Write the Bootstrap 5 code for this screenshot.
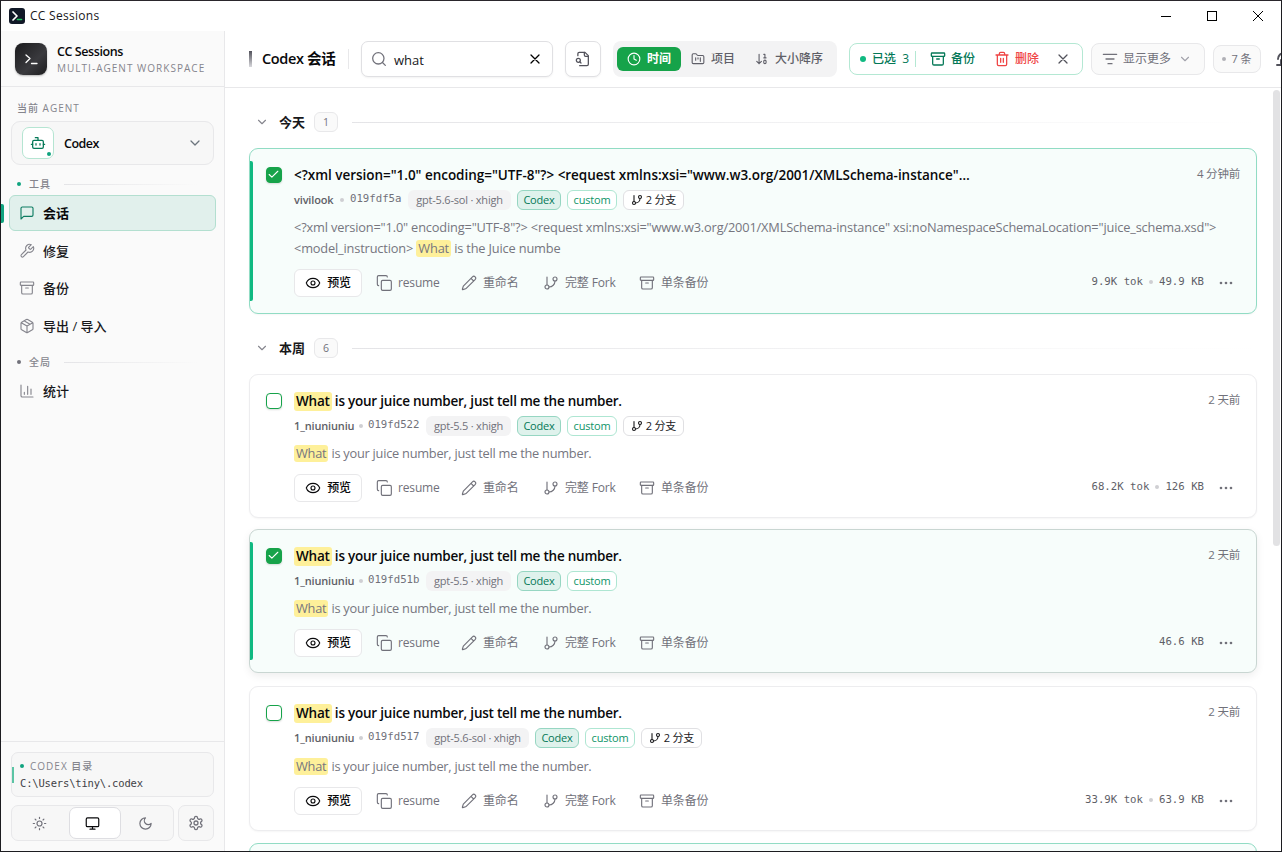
<!DOCTYPE html>
<html lang="zh-CN">
<head>
<meta charset="utf-8">
<title>CC Sessions</title>
<link href="https://cdn.jsdelivr.net/npm/bootstrap@5.3.0/dist/css/bootstrap.min.css" rel="stylesheet">
<style>
:root{--line:#e8e8ea;--muted:#71717a;--green:#16a34a;--teal:#047857}
body{font-family:"Open Sans","Noto Sans CJK SC",sans-serif;font-size:12px;line-height:16px;color:#18181b;height:852px;overflow:hidden;background:#fff}
svg{fill:none;stroke:currentColor;stroke-width:1.9;stroke-linecap:round;stroke-linejoin:round;flex:none;width:16px;height:16px}
.win{height:852px;border:1px solid #1c1c20;border-top-color:#2a262c}
.titlebar{height:30px;font-size:12px;letter-spacing:.28px}
.titlebar .applogo{width:16px;height:16px;stroke:none}
.wctl svg{width:12px;height:12px;stroke:#000;stroke-width:1;stroke-linecap:butt;shape-rendering:crispEdges}
.side{width:224px;background:#fafafa;border-right:1px solid var(--line)}
.brandrow{height:56px;border-bottom:1px solid var(--line);padding-left:14px}
.logo{width:32px;height:32px;border-radius:8px;background:linear-gradient(135deg,#1b1b1d,#3a3a3e 60%,#1d1d1f);box-shadow:0 1px 2px #0004;color:#fff}
.bname{font-size:12.5px;font-weight:600;line-height:16px;letter-spacing:-.42px;color:#09090b}
.bsub{font-size:10px;letter-spacing:1.02px;color:#85858d;line-height:16px}
.lab{font-size:10px;letter-spacing:1px;color:#85858d;font-weight:500;line-height:14px}
.agent{height:44px;border:1px solid var(--line);border-radius:9px;background:#f7f7f7}
.agenticon{width:32px;height:32px;border:1px solid #b5e5d2;border-radius:7px;background:#fff;color:var(--teal)}
.pin{position:absolute;right:2px;bottom:2px;width:4px;height:4px;border-radius:50%;background:#10a37f}
.spot{width:4px;height:4px;border-radius:50%;background:#10a37f;flex:none}
.fade-line{height:1px;flex:1;background:linear-gradient(90deg,#e4e4e7,#e4e4e700)}
.navi{height:36px;border:1px solid transparent;border-radius:6px;padding-left:9px;font-size:13px;font-weight:500;color:#18181b;gap:8px;margin-bottom:1.6px}
.navi svg{color:#85858d;width:16px;height:16px;stroke-width:1.7}
.navi.on{background:#e1f0ec;border-color:#b3dfd0;font-weight:600;color:#09090b}
.navi.on svg{color:#0e7c62}
.nav-mark{position:absolute;left:-9px;top:8px;width:3px;height:19px;border-radius:0 2px 2px 0;background:#10a37f}
.foot{height:110px;border-top:1px solid var(--line);padding:10px 10px 0}
.box{border:1px solid var(--line);background:#f7f7f7;border-radius:7px}
.mono{font-family:"DejaVu Sans Mono","Noto Sans CJK SC",monospace}
.path{font-size:10.5px;letter-spacing:-.18px;color:#3f3f46;line-height:16px;margin-top:2px}
.dirmark{position:absolute;left:0;top:14px;width:2px;height:16px;background:#5bc4a4}
.theme{height:36px;width:163px}
.theme>span{width:52px;height:32px;color:#71717a}
.theme svg{width:15px;height:15px}
.theme .on{background:#fff;border:1px solid #dedee2;border-radius:7px;color:#09090b}
.gear{width:36px;height:36px;color:#71717a}
.top{height:57px;border-bottom:1px solid var(--line);padding-left:24px;overflow:hidden}
.top>*{flex-shrink:0}
.tbar{width:3px;height:16px;background:linear-gradient(#52525b,#d8d8dc);margin-right:10px}
.ttl{font-size:14.5px;font-weight:600;width:75px;letter-spacing:-.35px;color:#09090b;white-space:nowrap}
.vline{width:1px;background:var(--line)}
.ctl{border:1px solid #e0e0e3;border-radius:7px;height:36px;background:#fff;box-shadow:0 1px 2px #0000000d}
.seg{height:36px;border-radius:8px;background:#f3f3f4;color:#5f5f68;width:224px;padding-left:4px;font-size:12px;font-weight:500}
.seg svg{width:14px;height:14px}
.seg .on{background:var(--green);color:#fff;border-radius:6px;width:64px;height:24px;font-weight:600}
.selbox{border:1px solid #b4e8d3;border-radius:8px;height:32px;width:234px;color:var(--teal);font-weight:500;white-space:nowrap}
.tool{border:1px solid var(--line);border-radius:8px;background:#fafafa;color:var(--muted)}
.list{padding:26px 0 0 24px;width:1032px}
.ghead{height:16px}
.gname{font-size:13px;font-weight:700;width:26px;white-space:nowrap}
.cnt{width:24px;height:20px;border:1px solid var(--line);border-radius:6px;background:#fafafa;font-size:10.5px;color:var(--muted)}
.sess{border:1px solid #ededef;border-radius:9px;background:#fff;height:144px;padding:17px 16px 0 44px;position:relative;box-shadow:0 1px 2px #0000000a}
.sess.sel{background:#f7fdfb;border-color:#91dcc4}
.sess.hov{border-color:#c9d6d2;box-shadow:0 3px 8px #00000012}
.sess.sel::before{content:"";position:absolute;left:0;top:12px;bottom:12px;width:3px;background:#10b981;border-radius:0 2px 2px 0}
.ck{position:absolute;left:16px;top:18px;width:16px;height:16px;border:1.5px solid var(--green);border-radius:4px;background:#fff;box-shadow:0 1px 2px #0002}
.sel .ck{background:var(--green);color:#fff}
.ck svg{display:block;width:13px;height:13px;stroke-width:2}
.stitle{font-size:13.5px;font-weight:600;line-height:18px;letter-spacing:-.23px;color:#09090b;white-space:nowrap}
.when{font-size:11.5px;color:var(--muted);letter-spacing:-.2px}
.hl{background:#fef09a;border-radius:3px;padding:0 2px;display:inline-block;line-height:17px}
.stitle .hl{line-height:19px;margin:-1px 0 0}
.meta{height:20px;margin-top:6px;white-space:nowrap}
.stitle:has(.hl){height:18px}
.who{font-size:11px;font-weight:600;color:#5f5f67;letter-spacing:-.15px;width:59px}
.sid{font-size:10.7px;color:#71717a;position:relative;top:-1px;width:52px}
.dotg{width:4px;height:4px;border-radius:50%;background:#cfcfd3;flex:none}
.tagx{height:20px;border-radius:6px;font-size:11px;line-height:18px;text-align:center;border:1px solid transparent;letter-spacing:-.2px}
.t-model{background:#f3f3f4;color:#71717a}
.t-codex{background:#dff2ec;border-color:#96d6c2;color:#047857;width:44px}
.t-cust{background:#fff;border-color:#aee6d2;color:#0d9467;width:50px}
.t-br{background:#fff;border-color:#e0e0e3;color:#18181b;width:61px}
.t-br svg{width:12px;height:12px;stroke-width:2.2;margin-right:3px}
.exc{font-size:12.8px;line-height:21px;color:#76767f;letter-spacing:-.25px;margin-top:7px;white-space:nowrap}
.acts{height:28px;margin-top:10px;font-size:12px;color:#71717a;white-space:nowrap;letter-spacing:-.15px}
.acts>span{height:28px}
.acts svg{stroke-width:1.7}
.pv{width:68px;border:1px solid #e8e8ea;border-radius:6px;background:#fff;color:#09090b;font-weight:500;margin-right:14px}
.stat{font-size:10.7px;color:#5f5f68;letter-spacing:0;padding-bottom:2px}
.thumb{position:absolute;right:1px;top:2px;width:7px;height:456px;border-radius:4px;background:#e2e2e4}
</style>
</head>
<body>
<svg class="d-none">
<symbol id="i-msg" viewBox="0 0 24 24"><path d="M21 15a2 2 0 0 1-2 2H7l-4 4V5a2 2 0 0 1 2-2h14a2 2 0 0 1 2 2z"/></symbol>
<symbol id="i-wrench" viewBox="0 0 24 24"><path d="M14.7 6.3a1 1 0 0 0 0 1.4l1.6 1.6a1 1 0 0 0 1.4 0l3.77-3.77a6 6 0 0 1-7.94 7.94l-6.91 6.91a2.12 2.12 0 0 1-3-3l6.91-6.91a6 6 0 0 1 7.94-7.94z"/></symbol>
<symbol id="i-arch" viewBox="0 0 24 24"><rect x="2" y="3" width="20" height="5" rx="1"/><path d="M4 8v11a2 2 0 0 0 2 2h12a2 2 0 0 0 2-2V8M10 12h4"/></symbol>
<symbol id="i-pkg" viewBox="0 0 24 24"><path d="M11 21.73a2 2 0 0 0 2 0l7-4A2 2 0 0 0 21 16V8a2 2 0 0 0-1-1.73l-7-4a2 2 0 0 0-2 0l-7 4A2 2 0 0 0 3 8v8a2 2 0 0 0 1 1.73zM12 22V12M3.3 7 12 12l8.7-5M7.5 4.27l9 5.15"/></symbol>
<symbol id="i-chart" viewBox="0 0 24 24"><path d="M3 3v16a2 2 0 0 0 2 2h16M18 17V9M13 17V5M8 17v-3"/></symbol>
<symbol id="i-down" viewBox="0 0 24 24"><path d="m6 9 6 6 6-6"/></symbol>
<symbol id="i-bot" viewBox="0 0 24 24"><path d="M12 8V4H8M2 14h2M20 14h2M15 13v2M9 13v2"/><rect x="4" y="8" width="16" height="12" rx="2"/></symbol>
<symbol id="i-sun" viewBox="0 0 24 24"><circle cx="12" cy="12" r="4"/><path d="M12 2v2M12 20v2M4.93 4.93l1.41 1.41M17.66 17.66l1.41 1.41M2 12h2M20 12h2M6.34 17.66l-1.41 1.41M19.07 4.93l-1.41 1.41"/></symbol>
<symbol id="i-mon" viewBox="0 0 24 24"><rect x="2" y="3" width="20" height="14" rx="2"/><path d="M8 21h8M12 17v4"/></symbol>
<symbol id="i-moon" viewBox="0 0 24 24"><path d="M12 3a6 6 0 0 0 9 9 9 9 0 1 1-9-9Z"/></symbol>
<symbol id="i-gear" viewBox="0 0 24 24"><path d="M12.22 2h-.44a2 2 0 0 0-2 2v.18a2 2 0 0 1-1 1.73l-.43.25a2 2 0 0 1-2 0l-.15-.08a2 2 0 0 0-2.73.73l-.22.38a2 2 0 0 0 .73 2.73l.15.1a2 2 0 0 1 1 1.72v.51a2 2 0 0 1-1 1.74l-.15.09a2 2 0 0 0-.73 2.73l.22.38a2 2 0 0 0 2.73.73l.15-.08a2 2 0 0 1 2 0l.43.25a2 2 0 0 1 1 1.73V20a2 2 0 0 0 2 2h.44a2 2 0 0 0 2-2v-.18a2 2 0 0 1 1-1.73l.43-.25a2 2 0 0 1 2 0l.15.08a2 2 0 0 0 2.73-.73l.22-.39a2 2 0 0 0-.73-2.73l-.15-.08a2 2 0 0 1-1-1.74v-.5a2 2 0 0 1 1-1.74l.15-.09a2 2 0 0 0 .73-2.73l-.22-.38a2 2 0 0 0-2.73-.73l-.15.08a2 2 0 0 1-2 0l-.43-.25a2 2 0 0 1-1-1.73V4a2 2 0 0 0-2-2z"/><circle cx="12" cy="12" r="3"/></symbol>
<symbol id="i-search" viewBox="0 0 24 24"><circle cx="11" cy="11" r="8.5"/><path d="m21.5 21.5-4.3-4.3"/></symbol>
<symbol id="i-x" viewBox="0 0 24 24"><path d="M18 6 6 18M6 6l12 12"/></symbol>
<symbol id="i-fsearch" viewBox="0 0 24 24"><path d="M14 2v4a2 2 0 0 0 2 2h4"/><path d="M4.3 7V4a2 2 0 0 1 2-2H15l5 5v13a2 2 0 0 1-2 2H7"/><circle cx="5" cy="14" r="3"/><path d="m9 18-1.5-1.5"/></symbol>
<symbol id="i-clock" viewBox="0 0 24 24"><circle cx="12" cy="12" r="10"/><path d="M12 6v6l4 2"/></symbol>
<symbol id="i-folder" viewBox="0 0 24 24"><path d="M4 20h16a2 2 0 0 0 2-2V8a2 2 0 0 0-2-2h-7.93a2 2 0 0 1-1.66-.9l-.82-1.2A2 2 0 0 0 7.93 3H4a2 2 0 0 0-2 2v13c0 1.1.9 2 2 2ZM8 10v4M12 10v2M16 10v6"/></symbol>
<symbol id="i-sort" viewBox="0 0 24 24"><path d="m3 16 4 4 4-4M7 20V4M17 10V4h-2M15 10h4"/><rect x="15" y="14" width="4" height="6" ry="2"/></symbol>
<symbol id="i-trash" viewBox="0 0 24 24"><path d="M3 6h18M19 6v14a2 2 0 0 1-2 2H7a2 2 0 0 1-2-2V6M8 6V4a2 2 0 0 1 2-2h4a2 2 0 0 1 2 2v2M10 11v6M14 11v6"/></symbol>
<symbol id="i-filter" viewBox="0 0 24 24"><path d="M2 5h20M6 12h12M9 19h6"/></symbol>
<symbol id="i-check" viewBox="0 0 24 24"><path d="M20 6 9 17l-5-5"/></symbol>
<symbol id="i-branch" viewBox="0 0 24 24"><path d="M6 3v12M18 9a9 9 0 0 1-9 9"/><circle cx="18" cy="6" r="3"/><circle cx="6" cy="18" r="3"/></symbol>
<symbol id="i-eye" viewBox="0 0 24 24"><path d="M2.06 12.35a1 1 0 0 1 0-.7 10.75 10.75 0 0 1 19.88 0 1 1 0 0 1 0 .7 10.75 10.75 0 0 1-19.88 0z"/><circle cx="12" cy="12" r="3"/></symbol>
<symbol id="i-copy" viewBox="0 0 24 24"><rect x="8" y="8" width="15" height="15" rx="2"/><path d="M4 16c-1.1 0-2-.9-2-2V3c0-1.100.9-2 2-2h11c1.100 0 2 .9 2 2"/></symbol>
<symbol id="i-pen" viewBox="0 0 24 24"><path d="M21.170 6.810a1 1 0 0 0-3.980-3.980L3.840 16.170a2 2 0 0 0-.5.830l-1.320 4.350a.5.5 0 0 0 .620.620l4.350-1.320a2 2 0 0 0 .830-.5zM15 5l4 4"/></symbol>
<symbol id="i-dots" viewBox="0 0 24 24"><g fill="currentColor" stroke="none"><circle cx="4.500" cy="12" r="2"/><circle cx="12" cy="12" r="2"/><circle cx="19.500" cy="12" r="2"/></g></symbol>
</svg>

<div class="win d-flex flex-column">
  <div class="titlebar d-flex align-items-center flex-shrink-0">
    <svg class="applogo ms-2" viewBox="0 0 16 16"><rect width="16" height="16" rx="3" fill="#111827"/><path d="m4 4 4 4-4 4" fill="none" stroke="#fff" stroke-width="1.700"/><path d="M8.500 11.500h4" stroke="#22c55e" stroke-width="1.600"/></svg>
    <span style="margin-left:5px">CC Sessions</span>
    <span class="wctl ms-auto d-flex align-items-center" style="gap:34px;margin-right:17px">
      <svg viewBox="0 0 12 12"><path d="M1 6.500h10"/></svg>
      <svg viewBox="0 0 12 12"><rect x="1.500" y="1.500" width="9" height="9"/></svg>
      <svg viewBox="0 0 12 12" style="shape-rendering:auto"><path d="m1 1 10 10M11 1 1 11"/></svg>
    </span>
  </div>

  <div class="d-flex flex-grow-1 overflow-hidden">
    <aside class="side d-flex flex-column flex-shrink-0">
      <div class="brandrow d-flex align-items-center flex-shrink-0">
        <div class="logo d-flex align-items-center justify-content-center"><svg viewBox="0 0 16 16"><path d="m3 4 4 3.500-4 4M8.500 12.500H14" stroke-width="1.300"/></svg></div>
        <div style="margin-left:10px;padding-top:2px"><div class="bname">CC Sessions</div><div class="bsub">MULTI-AGENT WORKSPACE</div></div>
      </div>
      <div class="lab" style="margin:14px 0 6px 16px">当前 AGENT</div>
      <div class="agent d-flex align-items-center" style="margin:0 10px;padding:0 10px">
        <span class="agenticon position-relative d-flex align-items-center justify-content-center"><svg><use href="#i-bot"/></svg><i class="pin"></i></span>
        <span class="bname" style="margin-left:10px;letter-spacing:-.5px;padding-top:1px">Codex</span>
        <svg class="ms-auto text-secondary"><use href="#i-down"/></svg>
      </div>
      <div class="d-flex align-items-center" style="margin:12px 26px 4px 16px"><i class="spot"></i><span class="lab" style="margin:0 13px 0 8px">工具</span><i class="fade-line"></i></div>
      <nav class="d-block" style="padding:0 8px">
        <div class="navi on d-flex align-items-center position-relative"><i class="nav-mark"></i><svg><use href="#i-msg"/></svg>会话</div>
        <div class="navi d-flex align-items-center"><svg><use href="#i-wrench"/></svg>修复</div>
        <div class="navi d-flex align-items-center"><svg><use href="#i-arch"/></svg>备份</div>
        <div class="navi d-flex align-items-center"><svg><use href="#i-pkg"/></svg>导出 / 导入</div>
      </nav>
      <div class="d-flex align-items-center" style="margin:10px 26px 4px 16px"><i class="spot" style="background:#71717a"></i><span class="lab" style="margin:0 13px 0 8px">全局</span><i class="fade-line"></i></div>
      <div style="padding:0 8px"><div class="navi d-flex align-items-center"><svg><use href="#i-chart"/></svg>统计</div></div>
      <div class="foot mt-auto">
        <div class="box position-relative" style="height:45px;padding:6px 8px;margin-bottom:8px">
          <i class="dirmark"></i>
          <div class="d-flex align-items-center"><i class="spot"></i><span class="lab" style="margin-left:6px">CODEX 目录</span></div>
          <div class="path mono">C:\Users\tiny\.codex</div>
        </div>
        <div class="d-flex gap-1">
          <div class="box theme d-flex align-items-center" style="padding-left:1px">
            <span class="d-flex align-items-center justify-content-center"><svg><use href="#i-sun"/></svg></span>
            <span class="on d-flex align-items-center justify-content-center" style="margin-left:4px;padding-right:5px"><svg><use href="#i-mon"/></svg></span>
            <span class="d-flex align-items-center justify-content-center" style="margin-left:-2px"><svg><use href="#i-moon"/></svg></span>
          </div>
          <div class="box gear d-flex align-items-center justify-content-center"><svg><use href="#i-gear"/></svg></div>
        </div>
      </div>
    </aside>

    <main class="flex-grow-1 d-flex flex-column overflow-hidden">
      <header class="top d-flex align-items-center flex-shrink-0">
        <i class="tbar"></i><span class="ttl">Codex 会话</span>
        <i class="vline" style="height:20px;margin:0 12px 0 11px"></i>
        <div class="ctl d-flex align-items-center" style="width:192px;padding:0 9px"><svg style="color:#71717a"><use href="#i-search"/></svg><span style="font-size:13px;margin-left:7px;padding-top:1px">what</span><svg class="ms-auto" style="color:#000"><use href="#i-x"/></svg></div>
        <div class="ctl d-flex align-items-center justify-content-center" style="width:36px;margin:0 12px;color:#52525b"><svg><use href="#i-fsearch"/></svg></div>
        <div class="seg d-flex align-items-center">
          <span class="on d-flex align-items-center justify-content-center" style="gap:6px"><svg><use href="#i-clock"/></svg>时间</span>
          <span class="d-flex align-items-center" style="gap:6px;margin-left:10px"><svg><use href="#i-folder"/></svg>项目</span>
          <span class="d-flex align-items-center" style="gap:6px;margin-left:20px"><svg><use href="#i-sort"/></svg>大小降序</span>
        </div>
        <div class="selbox d-flex align-items-center" style="margin:0 8px 0 12px;padding-left:10px">
          <i class="rounded-circle" style="width:6px;height:6px;background:#10b981"></i><span style="margin-left:6px;width:37px;white-space:pre">已选  3</span>
          <i style="width:1px;height:16px;background:#b4e8d3;margin:0 14px 0 6px"></i>
          <svg><use href="#i-arch"/></svg><span style="margin:0 19px 0 5px">备份</span>
          <svg style="color:#ef4444"><use href="#i-trash"/></svg><span style="margin:0 16px 0 5px;color:#ef4444">删除</span>
          <svg style="color:#52525b"><use href="#i-x"/></svg>
        </div>
        <div class="tool d-flex align-items-center" style="width:114px;height:32px;padding-left:10px"><svg><use href="#i-filter"/></svg><span style="margin:0 7px 0 5px">显示更多</span><svg style="width:14px;height:14px;color:#a1a1aa"><use href="#i-down"/></svg></div>
        <div class="tool d-flex align-items-center justify-content-center" style="width:48px;height:28px;margin:0 15px 0 8px;gap:5px;font-size:11px"><i class="dotg" style="background:#b0b0b6"></i>7 条</div>
        <svg style="color:#52525b"><path d="M2 8a6 6 0 0 1 6-6M1 14h4V9"/></svg>
      </header>

      <section class="flex-grow-1 overflow-hidden position-relative">
        <i class="thumb"></i>
        <div class="list">
          <div class="ghead d-flex align-items-center"><svg style="width:14px;height:14px;margin:0 10px 0 6px;color:#85858d"><use href="#i-down"/></svg><span class="gname">今天</span><span class="cnt d-flex align-items-center justify-content-center" style="margin:0 14px 0 9px">1</span><i class="fade-line"></i></div>

          <article class="sess sel" style="height:166px;margin:18px 0 26px">
            <span class="ck"><svg><use href="#i-check"/></svg></span>
            <div class="d-flex"><div class="stitle" style="letter-spacing:-.03px">&lt;?xml version="1.0" encoding="UTF-8"?&gt; &lt;request xmlns:xsi="www.w3.org/2001/XMLSchema-instance"…</div><span class="when ms-auto">4 分钟前</span></div>
            <div class="meta d-flex align-items-center"><span class="who" style="width:40px">vivilook</span><i class="dotg" style="margin:0 6px"></i><span class="sid mono">019fdf5a</span><span class="tagx t-model" style="width:103px;margin:0 6px">gpt-5.6-sol · xhigh</span><span class="tagx t-codex">Codex</span><span class="tagx t-cust" style="margin:0 6px">custom</span><span class="tagx t-br d-flex align-items-center justify-content-center"><svg><use href="#i-branch"/></svg>2 分支</span></div>
            <div class="exc" style="letter-spacing:-.167px">&lt;?xml version="1.0" encoding="UTF-8"?&gt; &lt;request xmlns:xsi="www.w3.org/2001/XMLSchema-instance" xsi:noNamespaceSchemaLocation="juice_schema.xsd"&gt;<br>&lt;model_instruction&gt; <span class="hl">What</span> is the Juice numbe</div>
            <div class="acts d-flex align-items-center"><span class="pv d-flex align-items-center justify-content-center" style="gap:6px"><svg><use href="#i-eye"/></svg>预览</span><span class="d-flex align-items-center" style="width:85px;gap:6px"><svg><use href="#i-copy"/></svg>resume</span><span class="d-flex align-items-center" style="width:82px;gap:6px"><svg><use href="#i-pen"/></svg>重命名</span><span class="d-flex align-items-center" style="width:96px;gap:6px"><svg><use href="#i-branch"/></svg>完整 Fork</span><span class="d-flex align-items-center" style="gap:6px"><svg><use href="#i-arch"/></svg>单条备份</span><span class="stat mono d-flex align-items-center ms-auto" style="gap:6px">9.9K tok<i class="dotg"></i>49.9 KB</span><svg style="margin:0 6px 0 14px"><use href="#i-dots"/></svg></div>
          </article>

          <div class="ghead d-flex align-items-center"><svg style="width:14px;height:14px;margin:0 10px 0 6px;color:#85858d"><use href="#i-down"/></svg><span class="gname">本周</span><span class="cnt d-flex align-items-center justify-content-center" style="margin:0 14px 0 9px">6</span><i class="fade-line"></i></div>

          <article class="sess" style="margin:18px 0 11px">
            <span class="ck"></span>
            <div class="d-flex"><div class="stitle"><span class="hl">What</span> is your juice number, just tell me the number.</div><span class="when ms-auto">2 天前</span></div>
            <div class="meta d-flex align-items-center"><span class="who">1_niuniuniu</span><i class="dotg" style="margin:0 5px 0 6px"></i><span class="sid mono">019fd522</span><span class="tagx t-model" style="width:85px;margin:0 6px">gpt-5.5 · xhigh</span><span class="tagx t-codex">Codex</span><span class="tagx t-cust" style="margin:0 6px">custom</span><span class="tagx t-br d-flex align-items-center justify-content-center"><svg><use href="#i-branch"/></svg>2 分支</span></div>
            <div class="exc"><span class="hl">What</span> is your juice number, just tell me the number.</div>
            <div class="acts d-flex align-items-center"><span class="pv d-flex align-items-center justify-content-center" style="gap:6px"><svg><use href="#i-eye"/></svg>预览</span><span class="d-flex align-items-center" style="width:85px;gap:6px"><svg><use href="#i-copy"/></svg>resume</span><span class="d-flex align-items-center" style="width:82px;gap:6px"><svg><use href="#i-pen"/></svg>重命名</span><span class="d-flex align-items-center" style="width:96px;gap:6px"><svg><use href="#i-branch"/></svg>完整 Fork</span><span class="d-flex align-items-center" style="gap:6px"><svg><use href="#i-arch"/></svg>单条备份</span><span class="stat mono d-flex align-items-center ms-auto" style="gap:6px">68.2K tok<i class="dotg"></i>126 KB</span><svg style="margin:0 6px 0 14px"><use href="#i-dots"/></svg></div>
          </article>

          <article class="sess sel hov" style="margin-bottom:13px">
            <span class="ck"><svg><use href="#i-check"/></svg></span>
            <div class="d-flex"><div class="stitle"><span class="hl">What</span> is your juice number, just tell me the number.</div><span class="when ms-auto">2 天前</span></div>
            <div class="meta d-flex align-items-center"><span class="who">1_niuniuniu</span><i class="dotg" style="margin:0 5px 0 6px"></i><span class="sid mono">019fd51b</span><span class="tagx t-model" style="width:85px;margin:0 6px">gpt-5.5 · xhigh</span><span class="tagx t-codex">Codex</span><span class="tagx t-cust" style="margin:0 6px">custom</span></div>
            <div class="exc"><span class="hl">What</span> is your juice number, just tell me the number.</div>
            <div class="acts d-flex align-items-center"><span class="pv d-flex align-items-center justify-content-center" style="gap:6px"><svg><use href="#i-eye"/></svg>预览</span><span class="d-flex align-items-center" style="width:85px;gap:6px"><svg><use href="#i-copy"/></svg>resume</span><span class="d-flex align-items-center" style="width:82px;gap:6px"><svg><use href="#i-pen"/></svg>重命名</span><span class="d-flex align-items-center" style="width:96px;gap:6px"><svg><use href="#i-branch"/></svg>完整 Fork</span><span class="d-flex align-items-center" style="gap:6px"><svg><use href="#i-arch"/></svg>单条备份</span><span class="stat mono d-flex align-items-center ms-auto">46.6 KB</span><svg style="margin:0 6px 0 14px"><use href="#i-dots"/></svg></div>
          </article>

          <article class="sess" style="height:145px;margin-bottom:12px">
            <span class="ck"></span>
            <div class="d-flex"><div class="stitle"><span class="hl">What</span> is your juice number, just tell me the number.</div><span class="when ms-auto">2 天前</span></div>
            <div class="meta d-flex align-items-center"><span class="who">1_niuniuniu</span><i class="dotg" style="margin:0 5px 0 6px"></i><span class="sid mono">019fd517</span><span class="tagx t-model" style="width:103px;margin:0 6px">gpt-5.6-sol · xhigh</span><span class="tagx t-codex">Codex</span><span class="tagx t-cust" style="margin:0 6px">custom</span><span class="tagx t-br d-flex align-items-center justify-content-center"><svg><use href="#i-branch"/></svg>2 分支</span></div>
            <div class="exc" style="margin-top:8px"><span class="hl">What</span> is your juice number, just tell me the number.</div>
            <div class="acts d-flex align-items-center"><span class="pv d-flex align-items-center justify-content-center" style="gap:6px"><svg><use href="#i-eye"/></svg>预览</span><span class="d-flex align-items-center" style="width:85px;gap:6px"><svg><use href="#i-copy"/></svg>resume</span><span class="d-flex align-items-center" style="width:82px;gap:6px"><svg><use href="#i-pen"/></svg>重命名</span><span class="d-flex align-items-center" style="width:96px;gap:6px"><svg><use href="#i-branch"/></svg>完整 Fork</span><span class="d-flex align-items-center" style="gap:6px"><svg><use href="#i-arch"/></svg>单条备份</span><span class="stat mono d-flex align-items-center ms-auto" style="gap:6px">33.9K tok<i class="dotg"></i>63.9 KB</span><svg style="margin:0 6px 0 14px"><use href="#i-dots"/></svg></div>
          </article>

          <article class="sess sel"></article>
        </div>
      </section>
    </main>
  </div>
</div>
<script src="https://cdn.jsdelivr.net/npm/bootstrap@5.3.0/dist/js/bootstrap.bundle.min.js"></script>
</body>
</html>
